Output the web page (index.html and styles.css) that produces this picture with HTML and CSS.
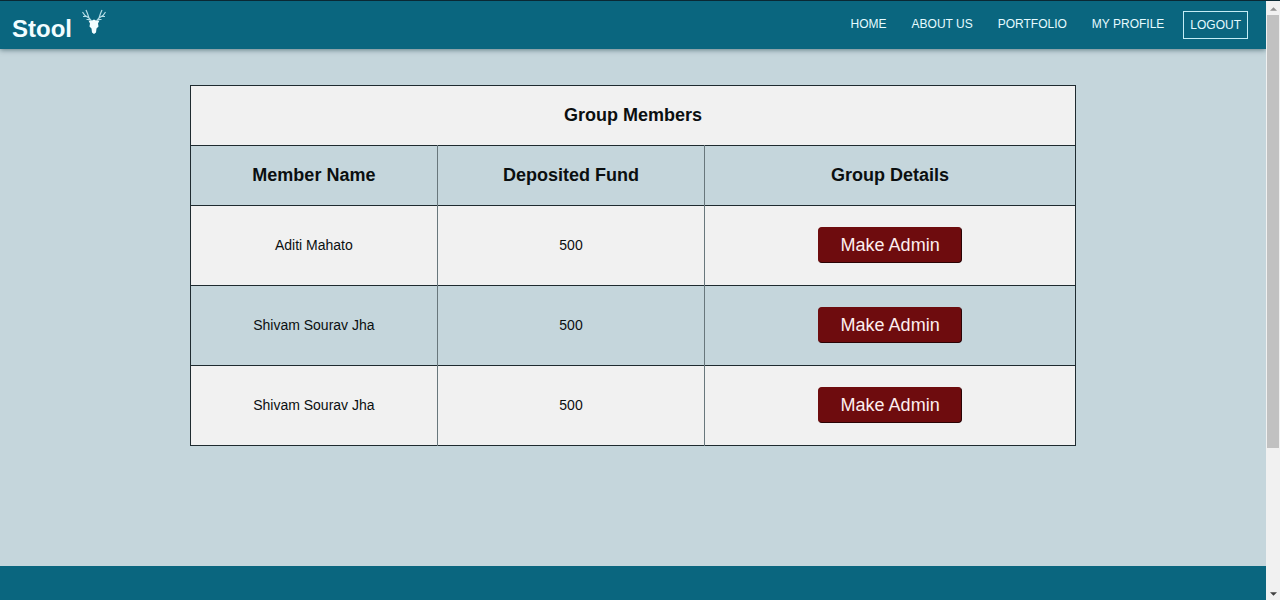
FILE: index.html
```html
<!DOCTYPE html>
<html lang="en">
<head>
<meta charset="utf-8">
<title>Stool</title>
<link rel="stylesheet" href="styles.css">
</head>
<body>
<div class="window">
  <div class="page">
    <header class="navbar">
      <a class="brand" href="#">Stool
        <svg class="brand-logo" viewBox="0 0 26 28" aria-hidden="true">
          <path class="antlers" d="M10.500 13 L8 10 L4 7.500 L1.500 4 M8 10 L6.500 5.500 L5 2 M5 8.500 L2 8.500 M9 11.500 L5.500 11.500 M15.500 13 L18 10 L22 7.500 L24.500 4 M18 10 L19.500 5.500 L21 2 M21 8.500 L24 8.500 M17 11.500 L20.500 11.500"/>
          <path class="head" d="M7.500 12.500 L10.500 12.800 L13 11.500 L15.500 12.800 L18.500 12.500 L17 15.500 L17.500 18.500 L15.500 20.500 L15 24.500 L13 26 L11 24.500 L10.500 20.500 L8.500 18.500 L9 15.500 Z"/>
        </svg>
      </a>
      <nav class="menu">
        <a class="menu-link" href="#">HOME</a>
        <a class="menu-link" href="#">ABOUT US</a>
        <a class="menu-link" href="#">PORTFOLIO</a>
        <a class="menu-link" href="#">MY PROFILE</a>
        <button class="logout" type="button">LOGOUT</button>
      </nav>
    </header>
    <main class="content">
      <table class="members">
        <colgroup><col class="col-name"><col class="col-fund"><col class="col-details"></colgroup>
        <thead>
          <tr><th colspan="3">Group Members</th></tr>
          <tr><th scope="col">Member Name</th><th scope="col">Deposited Fund</th><th scope="col">Group Details</th></tr>
        </thead>
        <tbody>
          <tr><td>Aditi Mahato</td><td>500</td><td><button class="make-admin" type="button">Make Admin</button></td></tr>
          <tr><td>Shivam Sourav Jha</td><td>500</td><td><button class="make-admin" type="button">Make Admin</button></td></tr>
          <tr><td>Shivam Sourav Jha</td><td>500</td><td><button class="make-admin" type="button">Make Admin</button></td></tr>
        </tbody>
      </table>
    </main>
    <footer class="footer"></footer>
  </div>
  <div class="scrollbar" aria-hidden="true">
    <svg class="arrow arrow-up" viewBox="0 0 8 5"><path d="M0 5 L4 1 L8 5 Z"/></svg>
    <div class="track"><div class="thumb"></div></div>
    <svg class="arrow" viewBox="0 0 8 5"><path d="M0 0 L4 4 L8 0 Z"/></svg>
  </div>
</div>
</body>
</html>
```

FILE: styles.css
```css
* {
  box-sizing: border-box;
}

body {
  margin: 0;
  font-family: "Liberation Sans", Arial, sans-serif;
  color: #0b0f10;
  background: #c5d6dc;
}

.window {
  display: flex;
  min-height: 100vh;
  border-top: 1px solid #0c2a35;
}

.page {
  flex: 1;
  display: flex;
  flex-direction: column;
}

.navbar {
  display: flex;
  justify-content: space-between;
  align-items: center;
  height: 48px;
  padding: 0 18px 0 12px;
  background: #0a667f;
  box-shadow: 0 1px 5px rgba(0, 40, 50, 0.5);
}

.brand {
  display: flex;
  align-items: center;
  gap: 9px;
  padding-top: 8px;
  font-size: 24px;
  font-weight: bold;
  color: #f2fdff;
  text-decoration: none;
}

.brand-logo {
  width: 26px;
  height: 28px;
  margin-bottom: 14px;
}

.antlers {
  fill: none;
  stroke: #b4dce6;
  stroke-width: 1.2;
}

.head {
  fill: #f2fdff;
}

.menu {
  display: flex;
  align-items: center;
  font-size: 12px;
}

.menu-link {
  margin-right: 25px;
  padding-bottom: 2px;
  color: #e6fbff;
  text-decoration: none;
}

.menu-link:nth-last-child(2) {
  margin-right: 19px;
}

.logout {
  height: 28px;
  padding: 0 6px;
  border: 1px solid #c4edf5;
  background: none;
  font: inherit;
  color: #e6fbff;
}

.content {
  flex: 1;
  padding: 36px 0;
}

.members {
  width: 70%;
  margin: 0 auto;
  border-collapse: collapse;
  table-layout: fixed;
  border: 1px solid #1f2b30;
  text-align: center;
}

.col-name {
  width: 27.9%;
}

.col-fund {
  width: 30.2%;
}

.col-details {
  width: 41.9%;
}

.members tr {
  height: 80px;
  border-bottom: 1px solid #1f2b30;
}

.members thead tr {
  height: 60px;
}

.members tr:nth-child(odd) {
  background: #f1f1f1;
}

.members tr:nth-child(even) {
  background: #c5d6dc;
}

.members th,
.members td {
  padding: 0;
  border-right: 1px solid #68777c;
}

.members th:last-child,
.members td:last-child {
  border-right-color: #1f2b30;
}

.members th {
  font-size: 18px;
}

.members td {
  padding-bottom: 2px;
  font-size: 14px;
}

.make-admin {
  width: 144px;
  height: 36px;
  padding: 1px 0 0;
  border: 1px solid #6e0c0e;
  border-right-color: #2b0305;
  border-bottom-color: #2b0305;
  border-radius: 4px;
  background: #6e0c0e;
  font: inherit;
  font-size: 18px;
  color: #fdeeee;
}

.footer {
  height: 34px;
  background: #0a667f;
}

.scrollbar {
  display: flex;
  flex-direction: column;
  align-items: center;
  width: 14px;
  padding: 5px 0 3px;
  background: #f1f1f1;
}

.arrow {
  width: 7px;
  height: 5px;
  fill: #404040;
}

.arrow-up {
  fill: #909090;
}

.track {
  flex: 1;
  width: 12px;
  padding: 4px 0;
}

.thumb {
  height: 75.5%;
  background: #c1c1c1;
}
```
